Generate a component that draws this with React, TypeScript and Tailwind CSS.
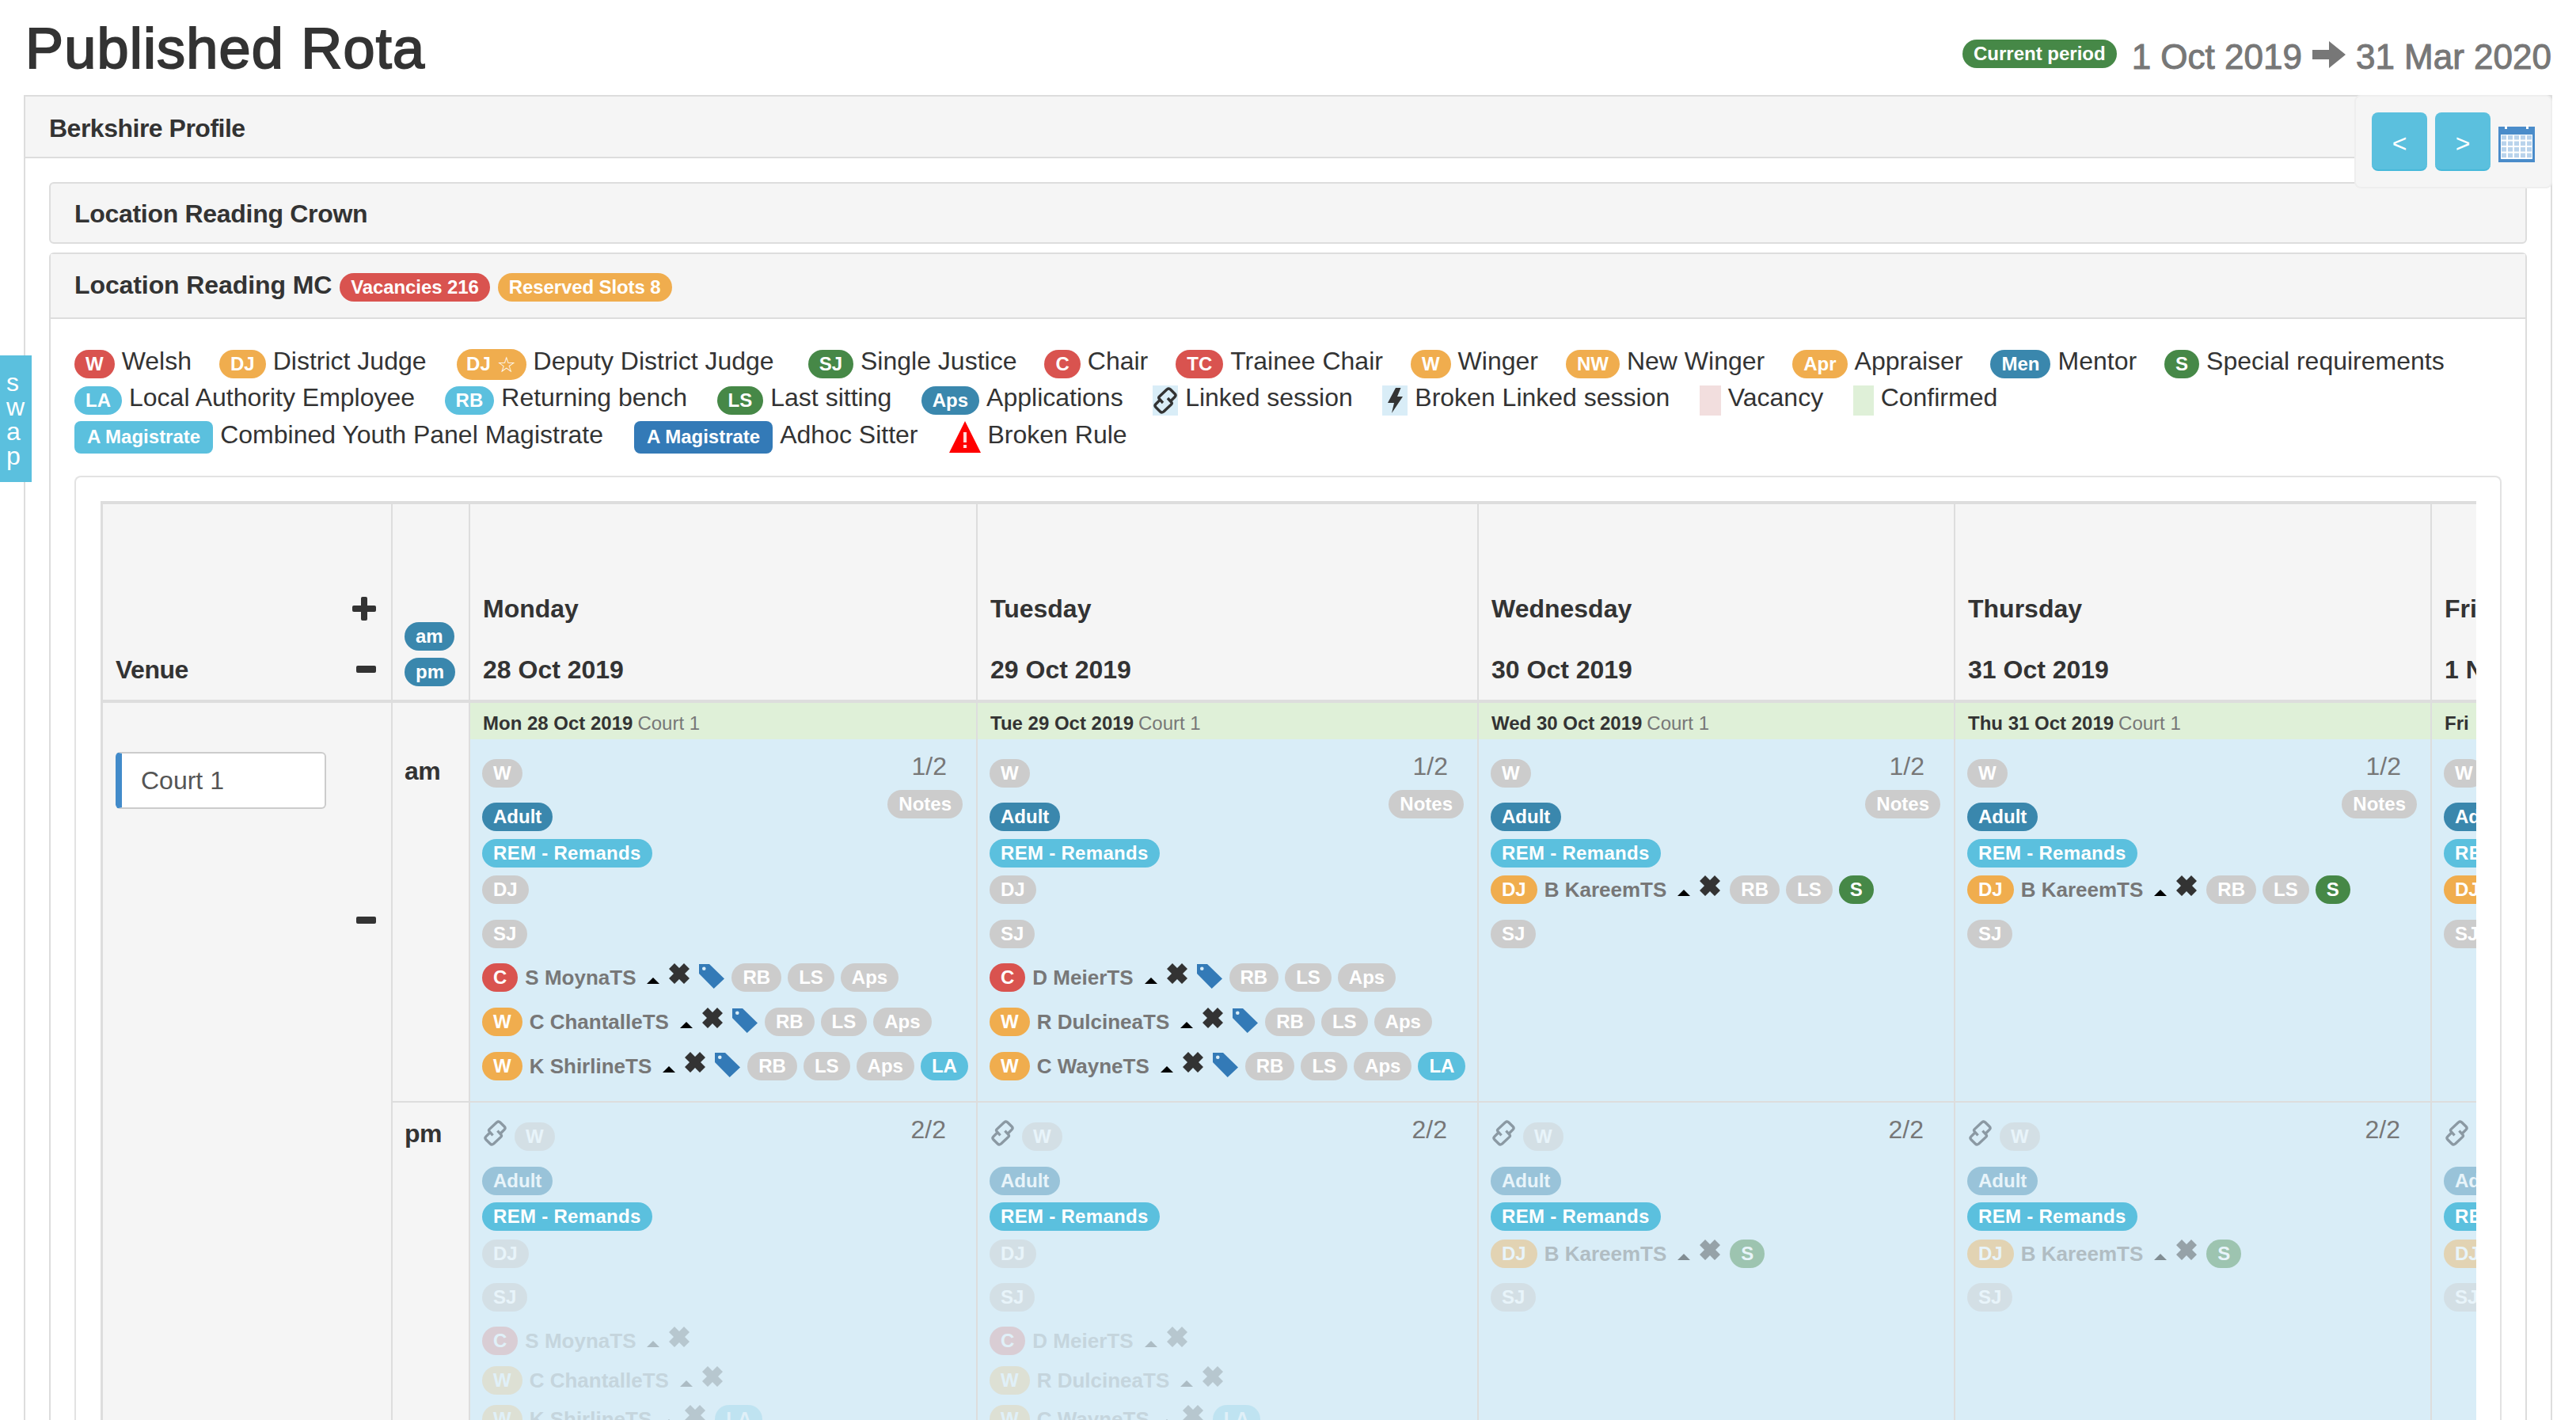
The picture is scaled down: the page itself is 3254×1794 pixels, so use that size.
import React from "react";

const RED = "bg-[#d9534f]";
const ORANGE = "bg-[#f0ad4e]";
const GREEN = "bg-[#468847]";
const BLUE = "bg-[#3a87ad]";
const CYAN = "bg-[#5bc0de]";
const GREY = "bg-[#cccccc]";

function Badge({ color, children, className = "" }: { color: string; children: React.ReactNode; className?: string }) {
  return (
    <span className={`inline-flex h-[36px] shrink-0 items-center justify-center whitespace-nowrap rounded-[20px] px-[14px] text-[24px] font-bold leading-none text-white ${color} ${className}`}>
      {children}
    </span>
  );
}

function LinkIcon({ className = "" }: { className?: string }) {
  return (
    <svg viewBox="0 0 30 34" className={className} fill="none" stroke="currentColor" strokeWidth="3.4" strokeLinejoin="round">
      <path d="M12 20 L7.500 15 Q6 13.500 7.500 12 L17 3 Q19.500 1 21.500 3 L27 8.500 Q29 10.500 27 12.500 L22 17.500" />
      <path d="M18 14 L22.500 19 Q24 20.500 22.500 22 L13 31 Q10.500 33 8.500 31 L3 25.500 Q1 23.500 3 21.500 L8 16.500" />
    </svg>
  );
}

function BoltIcon({ className = "" }: { className?: string }) {
  return (
    <svg viewBox="0 0 19 32" className={className} fill="currentColor">
      <polygon points="10,0 16.500,0 12,11 19,11 5,32 8,19 0,19" />
    </svg>
  );
}

function CrossIcon() {
  return (
    <svg viewBox="0 0 26 26" className="h-[26px] w-[26px] shrink-0 text-[#333333]" fill="currentColor">
      <polygon points="7,0 13,6 19,0 26,7 20,13 26,19 19,26 13,20 7,26 0,19 6,13 0,7" />
    </svg>
  );
}

function TagIcon() {
  return (
    <svg viewBox="0 0 32 32" className="h-[32px] w-[32px] shrink-0 text-[#337ab7]">
      <path fill="currentColor" fillRule="evenodd" d="M0 1 H13 L32 19.500 L18.700 32 L0 13 Z M6.300 4.400 A2.300 2.300 0 1 0 6.300 9 A2.300 2.300 0 1 0 6.300 4.400 Z" />
    </svg>
  );
}

function Caret() {
  return <span className="mt-[18px] h-0 w-0 shrink-0 border-x-[8px] border-b-[8px] border-x-transparent border-b-black" />;
}

function Person({
  role,
  roleColor,
  name,
  tag,
  extras,
  rowClass,
  faded = "",
}: {
  role: string;
  roleColor: string;
  name: string;
  tag?: boolean;
  extras: [string, string][];
  rowClass: string;
  faded?: string;
}) {
  return (
    <div className={`flex items-start ${rowClass} ${faded}`}>
      <Badge color={roleColor}>{role}</Badge>
      <span className="ml-[9px] whitespace-nowrap text-[26px] font-bold leading-[36px] text-[#777777]">{name}</span>
      <span className="ml-[14px] flex">
        <Caret />
      </span>
      <span className="ml-[12px]">
        <CrossIcon />
      </span>
      {tag && (
        <span className="ml-[12px]">
          <TagIcon />
        </span>
      )}
      <span className={`flex gap-[8px] ${tag ? "ml-[9px]" : "ml-[12px]"}`}>
        {extras.map(([t, c]) => (
          <Badge key={t} color={c}>
            {t}
          </Badge>
        ))}
      </span>
    </div>
  );
}

type Day = {
  day: string;
  date: string;
  short: string;
  names: string[];
};

const days: Day[] = [
  { day: "Monday", date: "28 Oct 2019", short: "Mon 28 Oct 2019", names: ["S MoynaTS", "C ChantalleTS", "K ShirlineTS"] },
  { day: "Tuesday", date: "29 Oct 2019", short: "Tue 29 Oct 2019", names: ["D MeierTS", "R DulcineaTS", "C WayneTS"] },
  { day: "Wednesday", date: "30 Oct 2019", short: "Wed 30 Oct 2019", names: ["B KareemTS"] },
  { day: "Thursday", date: "31 Oct 2019", short: "Thu 31 Oct 2019", names: ["B KareemTS"] },
  { day: "Friday", date: "1 Nov 2019", short: "Fri 1 Nov 2019", names: ["B KareemTS"] },
];

function AmCell({ d }: { d: Day }) {
  const full = d.names.length === 3;
  return (
    <div className="border-l-2 border-[#dddddd] bg-[#d9edf7]">
      <div className="flex h-[46px] items-start bg-[#dff0d8] pl-[16px] pt-[8px] text-[24px] leading-[36px]">
        <span className={`whitespace-nowrap font-bold text-[#333333] ${d.day === "Friday" ? "[word-spacing:8px]" : ""}`}>{d.short}</span>
        <span className="ml-[6px] whitespace-nowrap text-[#777777]">Court 1</span>
      </div>
      <div className="pb-[26px] pl-[15px] pr-[17px] pt-[25px]">
        <div className="flex justify-between">
          <div>
            <div className="h-[55px]">
              <Badge color={GREY}>W</Badge>
            </div>
            <div className="h-[46px]">
              <Badge color={BLUE}>Adult</Badge>
            </div>
          </div>
          <div className="flex flex-col items-end">
            <span className="mr-[20px] mt-[-9px] text-[32px] leading-[36px] text-[#777777]">1/2</span>
            <Badge color={GREY} className="mt-[12px]">
              Notes
            </Badge>
          </div>
        </div>
        <div className="h-[46px]">
          <Badge color={CYAN} className="tracking-[0.3px]">
            REM - Remands
          </Badge>
        </div>
        {full ? (
          <div className="h-[56px]">
            <Badge color={GREY}>DJ</Badge>
          </div>
        ) : (
          <Person
            role="DJ"
            roleColor={ORANGE}
            name={d.names[0]}
            rowClass="h-[56px]"
            extras={[
              ["RB", GREY],
              ["LS", GREY],
              ["S", GREEN],
            ]}
          />
        )}
        <div className="h-[55px]">
          <Badge color={GREY}>SJ</Badge>
        </div>
        {full ? (
          <>
            <Person role="C" roleColor={RED} name={d.names[0]} tag rowClass="h-[56px]" extras={[["RB", GREY], ["LS", GREY], ["Aps", GREY]]} />
            <Person role="W" roleColor={ORANGE} name={d.names[1]} tag rowClass="h-[56px]" extras={[["RB", GREY], ["LS", GREY], ["Aps", GREY]]} />
            <Person role="W" roleColor={ORANGE} name={d.names[2]} tag rowClass="h-[36px]" extras={[["RB", GREY], ["LS", GREY], ["Aps", GREY], ["LA", CYAN]]} />
          </>
        ) : (
          <div className="h-[148px]" />
        )}
      </div>
    </div>
  );
}

function PmCell({ d }: { d: Day }) {
  const full = d.names.length === 3;
  return (
    <div className="border-l-2 border-t-2 border-[#dddddd] bg-[#d9edf7] pl-[15px] pr-[38px] pt-[25px]">
      <div className="flex h-[56px] items-start justify-between">
        <div className="flex items-start">
          <LinkIcon className="ml-[2px] mt-[-3px] h-[33px] w-[29px] text-[#8b99a3]" />
          <Badge color={GREY} className="ml-[10px] opacity-40">
            W
          </Badge>
        </div>
        <span className="mt-[-9px] text-[32px] leading-[36px] text-[#777777]">2/2</span>
      </div>
      <div className="h-[45px]">
        <Badge color={BLUE} className="opacity-40">
          Adult
        </Badge>
      </div>
      <div className="h-[47px]">
        <Badge color={CYAN} className="tracking-[0.3px]">
          REM - Remands
        </Badge>
      </div>
      {full ? (
        <div className="h-[55px]">
          <Badge color={GREY} className="opacity-40">
            DJ
          </Badge>
        </div>
      ) : (
        <Person role="DJ" roleColor={ORANGE} name={d.names[0]} rowClass="h-[55px]" faded="opacity-40" extras={[["S", GREEN]]} />
      )}
      <div className="h-[55px]">
        <Badge color={GREY} className="opacity-40">
          SJ
        </Badge>
      </div>
      {full && (
        <>
          <Person role="C" roleColor={RED} name={d.names[0]} rowClass="h-[50px]" faded="opacity-20" extras={[]} />
          <Person role="W" roleColor={ORANGE} name={d.names[1]} rowClass="h-[49px]" faded="opacity-20" extras={[]} />
          <Person role="W" roleColor={ORANGE} name={d.names[2]} rowClass="h-[50px]" faded="opacity-20" extras={[["LA", CYAN]]} />
        </>
      )}
    </div>
  );
}

function LegendItem({ badge, label, className = "" }: { badge: React.ReactNode; label: string; className?: string }) {
  return (
    <span className={`flex items-center gap-[9px] ${className}`}>
      {badge}
      <span className="mt-[-8px] whitespace-nowrap">{label}</span>
    </span>
  );
}

function Legend() {
  return (
    <div className="mb-[26px] text-[32px] leading-[46px] text-[#333333]">
      <div className="flex h-[46px] items-center gap-[35px]">
        <LegendItem badge={<Badge color={RED}>W</Badge>} label="Welsh" />
        <LegendItem badge={<Badge color={ORANGE}>DJ</Badge>} label="District Judge" />
        <LegendItem
          className="ml-[3px]"
          badge={
            <Badge color={ORANGE} className="h-[39px] w-[88px] gap-[8px] !px-0">
              DJ<span className="font-['DejaVu_Sans',sans-serif] text-[27px] font-normal">☆</span>
            </Badge>
          }
          label="Deputy District Judge"
        />
        <LegendItem className="ml-[8px]" badge={<Badge color={GREEN}>SJ</Badge>} label="Single Justice" />
        <LegendItem badge={<Badge color={RED}>C</Badge>} label="Chair" />
        <LegendItem badge={<Badge color={RED}>TC</Badge>} label="Trainee Chair" />
        <LegendItem badge={<Badge color={ORANGE}>W</Badge>} label="Winger" />
        <LegendItem badge={<Badge color={ORANGE}>NW</Badge>} label="New Winger" />
        <LegendItem badge={<Badge color={ORANGE}>Apr</Badge>} label="Appraiser" />
        <LegendItem badge={<Badge color={BLUE}>Men</Badge>} label="Mentor" />
        <LegendItem badge={<Badge color={GREEN}>S</Badge>} label="Special requirements" />
      </div>
      <div className="flex h-[46px] items-center gap-[37.5px]">
        <LegendItem badge={<Badge color={CYAN}>LA</Badge>} label="Local Authority Employee" />
        <LegendItem badge={<Badge color={CYAN}>RB</Badge>} label="Returning bench" />
        <LegendItem badge={<Badge color={GREEN}>LS</Badge>} label="Last sitting" />
        <LegendItem badge={<Badge color={BLUE}>Aps</Badge>} label="Applications" />
        <LegendItem
          badge={
            <span className="flex h-[38px] w-[32px] items-center justify-center bg-[#d9edf7] text-[#333333]">
              <LinkIcon className="h-[34px] w-[30px]" />
            </span>
          }
          label="Linked session"
        />
        <LegendItem
          badge={
            <span className="flex h-[38px] w-[32px] items-center justify-center bg-[#d9edf7] text-[#333333]">
              <BoltIcon className="h-[32px] w-[19px]" />
            </span>
          }
          label="Broken Linked session"
        />
        <LegendItem badge={<span className="block h-[38px] w-[27px] bg-[#f2dede]" />} label="Vacancy" />
        <LegendItem badge={<span className="block h-[38px] w-[26px] bg-[#dff0d8]" />} label="Confirmed" />
      </div>
      <div className="flex h-[46px] items-center gap-[39px]">
        <span className="flex items-center gap-[9px]">
          <span className="flex h-[41px] items-center rounded-[8px] bg-[#5bc0de] px-[16px] text-[24px] font-bold leading-none text-white">A Magistrate</span>
          <span className="mt-[-6px] whitespace-nowrap">Combined Youth Panel Magistrate</span>
        </span>
        <span className="flex items-center gap-[9px]">
          <span className="flex h-[41px] items-center rounded-[8px] bg-[#337ab7] px-[16px] text-[24px] font-bold leading-none text-white">A Magistrate</span>
          <span className="mt-[-6px] whitespace-nowrap">Adhoc Sitter</span>
        </span>
        <span className="flex items-center gap-[9px]">
          <svg viewBox="0 0 40 40" className="h-[40px] w-[40px]">
            <polygon points="20,0 40,40 0,40" fill="#ff0000" />
            <rect x="18" y="14" width="4" height="13" fill="#ffffff" opacity="0.85" />
            <rect x="18" y="30" width="4" height="4" fill="#ffffff" opacity="0.85" />
          </svg>
          <span className="mt-[-6px] whitespace-nowrap">Broken Rule</span>
        </span>
      </div>
    </div>
  );
}

function RotaGrid() {
  return (
    <div className="overflow-hidden">
      <div className="grid w-[3144px] grid-cols-[367px_98px_641px_633px_602px_602px_201px]">
        {/* header row */}
        <div className="flex h-[255px] items-end justify-between border-b-4 border-l-[3px] border-t-4 border-[#dddddd] bg-[#f5f5f5] pb-[20px] pl-[16px] pr-[19px]">
          <span className="text-[32px] font-bold leading-[36px] tracking-[-0.5px] text-[#333333]">Venue</span>
          <div className="mb-[14px] flex flex-col items-end">
            <svg viewBox="0 0 30 30" className="h-[30px] w-[30px]" fill="#333333">
              <rect x="11" y="0" width="8" height="30" rx="2" />
              <rect x="0" y="11" width="30" height="8" rx="2" />
            </svg>
            <span className="mt-[57px] block h-[9px] w-[25px] rounded-[2px] bg-[#333333]" />
          </div>
        </div>
        <div className="flex h-[255px] flex-col items-start justify-end gap-[9px] border-b-4 border-l-2 border-t-4 border-[#dddddd] bg-[#f5f5f5] pb-[17px] pl-[15px]">
          <Badge color={BLUE}>am</Badge>
          <Badge color={BLUE}>pm</Badge>
        </div>
        {days.map((d) => (
          <div key={d.day} className="flex h-[255px] flex-col justify-end gap-[41px] border-b-4 border-l-2 border-t-4 border-[#dddddd] bg-[#f5f5f5] pb-[20px] pl-[16px] text-[32px] font-bold leading-[36px] text-[#333333]">
            <span className="whitespace-nowrap">{d.day}</span>
            <span className="whitespace-nowrap">{d.date}</span>
          </div>
        ))}

        {/* venue cell */}
        <div className="row-span-2 flex flex-col border-l-[3px] border-[#dddddd] bg-[#f5f5f5] pl-[16px] pr-[19px] pt-[62px]">
          <div className="flex h-[72px] w-[266px] items-center rounded-[6px] border-2 border-l-[8px] border-[#cccccc] border-l-[#428bca] bg-white pl-[24px] text-[32px] leading-[36px] text-[#555555]">
            Court 1
          </div>
          <span className="mt-[136px] block h-[9px] w-[25px] self-end rounded-[2px] bg-[#333333]" />
        </div>

        {/* am row */}
        <div className="border-l-2 border-[#dddddd] bg-[#f5f5f5] pl-[15px] pt-[68px] text-[32px] font-bold leading-[36px] tracking-[-0.5px] text-[#333333]">am</div>
        {days.map((d) => (
          <AmCell key={d.day} d={d} />
        ))}

        {/* pm row */}
        <div className="h-[480px] border-l-2 border-t-2 border-[#dddddd] bg-[#f5f5f5] pl-[15px] pt-[21px] text-[32px] font-bold leading-[36px] tracking-[-0.5px] text-[#333333]">pm</div>
        {days.map((d) => (
          <PmCell key={d.day} d={d} />
        ))}
      </div>
    </div>
  );
}

export default function App() {
  return (
    <div className="relative h-[1794px] w-[3254px] overflow-hidden bg-white font-['Liberation_Sans',Arial,sans-serif] text-[#333333]">
      {/* page title */}
      <header className="flex h-[120px] justify-between pl-[32px] pr-[31px] pt-[21px]">
        <h1 className="text-[72px] leading-[80px] tracking-[1.2px] text-[#333333] [-webkit-text-stroke:2px_#333333]">Published Rota</h1>
        <div className="mt-[25px] flex h-[52px] items-center text-[44px] leading-[52px] text-[#777777] [-webkit-text-stroke:1px_#777777]">
          <Badge color={GREEN} className="mr-[19px] mt-[-9px] [-webkit-text-stroke:0]">
            Current period
          </Badge>
          <span>1 Oct 2019</span>
          <svg viewBox="0 0 42 34" className="mx-[13px] mt-[-6px] h-[34px] w-[42px]" fill="#777777">
            <polygon points="0,11 21,11 21,0 42,17 21,34 21,23 0,23" />
          </svg>
          <span>31 Mar 2020</span>
        </div>
      </header>

      {/* swap tab */}
      <div className="absolute left-0 top-[449px] z-10 flex h-[160px] w-[40px] flex-col bg-[#5bc0de] pl-[8px] pt-[19px] text-[32px] leading-[31px] text-white">
        <span>s</span>
        <span>w</span>
        <span>a</span>
        <span>p</span>
      </div>

      {/* date navigator */}
      <div className="absolute right-[30px] top-[120px] z-10 flex h-[118px] w-[250px] items-start gap-[10px] rounded-[8px] border-2 border-[#eeeeee] bg-[#f5f5f5] pl-[20px] pt-[20px]">
        <button className="flex h-[74px] w-[70px] items-center justify-center rounded-[8px] border-b-2 border-[#46b8da] bg-[#5bc0de] pt-[6px] text-[32px] leading-none text-white">&lt;</button>
        <button className="flex h-[74px] w-[70px] items-center justify-center rounded-[8px] border-b-2 border-[#46b8da] bg-[#5bc0de] pt-[6px] text-[32px] leading-none text-white">&gt;</button>
        <svg viewBox="0 0 46 47" className="mt-[16px] h-[47px] w-[46px]">
          <rect x="0" y="2" width="46" height="45" fill="#4a8cca" />
          <rect x="8" y="0" width="3" height="5" fill="#ffffff" />
          <rect x="35" y="0" width="3" height="5" fill="#ffffff" />
          <rect x="3" y="12" width="40" height="31" fill="#ffffff" />
          {[0, 1, 2, 3, 4].map((c) =>
            [0, 1, 2, 3].map((r) => <rect key={`${c}-${r}`} x={4 + c * 8} y={13 + r * 7.500} width="6" height="5.500" fill="#b9d3ec" />),
          )}
        </svg>
      </div>

      {/* outer panel */}
      <section className="mx-[30px] border-2 border-b-0 border-[#dddddd]">
        <div className="h-[78px] border-b-2 border-[#dddddd] bg-[#f5f5f5] pl-[30px] pt-[22px] text-[32px] font-bold leading-[36px] tracking-[-0.5px] text-[#333333]">Berkshire Profile</div>
        <div className="px-[30px] pt-[30px]">
          <div className="mb-[11px] h-[78px] rounded-[6px] border-2 border-[#dddddd] bg-[#f5f5f5] pl-[30px] pt-[20px] text-[32px] font-bold leading-[36px] tracking-[-0.3px] text-[#333333]">Location Reading Crown</div>

          <div className="rounded-t-[6px] border-2 border-b-0 border-[#dddddd]">
            <div className="flex h-[82px] border-b-2 border-[#dddddd] bg-[#f5f5f5] pl-[30px] pt-[21px]">
              <span className="text-[32px] font-bold leading-[36px] tracking-[-0.1px] text-[#333333]">Location Reading MC</span>
              <Badge color={RED} className="ml-[10px] mt-[3px] tracking-[-0.1px]">
                Vacancies 216
              </Badge>
              <Badge color={ORANGE} className="ml-[10px] mt-[3px] tracking-[-0.1px]">
                Reserved Slots 8
              </Badge>
            </div>
            <div className="px-[30px] pt-[34px]">
              <Legend />
              <div className="rounded-t-[8px] border-2 border-b-0 border-[#e3e3e3] pl-[31px] pr-[30px] pt-[30px]">
                <RotaGrid />
              </div>
            </div>
          </div>
        </div>
      </section>
    </div>
  );
}
